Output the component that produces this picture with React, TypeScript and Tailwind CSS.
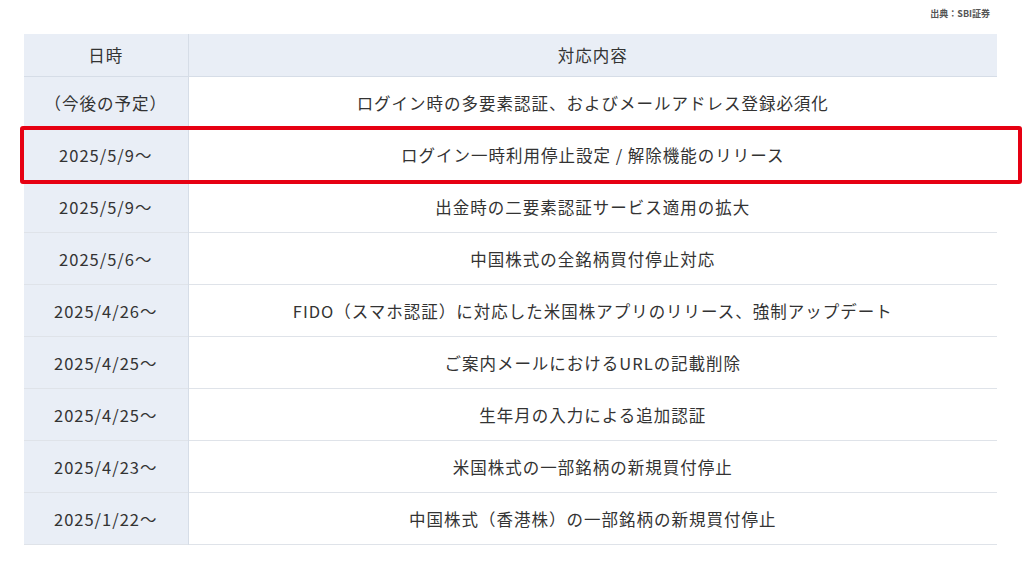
const rows = [
  { date: '（今後の予定）', content: 'ログイン時の多要素認証、およびメールアドレス登録必須化' },
  { date: '2025/5/9〜', content: 'ログイン一時利用停止設定 / 解除機能のリリース' },
  { date: '2025/5/9〜', content: '出金時の二要素認証サービス適用の拡大' },
  { date: '2025/5/6〜', content: '中国株式の全銘柄買付停止対応' },
  { date: '2025/4/26〜', content: 'FIDO（スマホ認証）に対応した米国株アプリのリリース、強制アップデート' },
  { date: '2025/4/25〜', content: 'ご案内メールにおけるURLの記載削除' },
  { date: '2025/4/25〜', content: '生年月の入力による追加認証' },
  { date: '2025/4/23〜', content: '米国株式の一部銘柄の新規買付停止' },
  { date: '2025/1/22〜', content: '中国株式（香港株）の一部銘柄の新規買付停止' },
]

export default function App() {
  return (
    <div
      className="w-[1024px] h-[566px] bg-white text-[#333] overflow-hidden"
      style={{ fontFamily: '"Noto Sans CJK JP", "Noto Sans", sans-serif' }}
    >
      <div className="flex justify-end pr-[34px] pt-[9px] h-[34px]">
        <span className="text-[9px] font-bold text-[#555] leading-none">出典：SBI証券</span>
      </div>

      <div className="relative ml-6 w-[973px]">
        <table className="w-full border-collapse text-[16.5px] tracking-[0.06em]">
          <thead>
            <tr className="h-[42px] bg-[#e9eef6] border-b border-[#d6dde7]">
              <th className="w-[164px] pt-[2px] font-normal text-center border-r border-[#d6dde7]">日時</th>
              <th className="pt-[2px] font-normal text-center">対応内容</th>
            </tr>
          </thead>
          <tbody>
            {rows.map((r, i) => (
              <tr key={i} className="h-[52px] border-b border-[#dfe3e9]">
                <td className="bg-[#e9eef6] pt-[3px] text-center border-r border-[#d6dde7]">{r.date}</td>
                <td className="pt-[3px] text-center">{r.content}</td>
              </tr>
            ))}
          </tbody>
        </table>

        {/* highlight box */}
        <div className="absolute left-[-4px] right-[-25px] top-[92px] h-[58px] border-[4px] border-[#e60012] rounded-[3px] pointer-events-none" />
      </div>
    </div>
  )
}
